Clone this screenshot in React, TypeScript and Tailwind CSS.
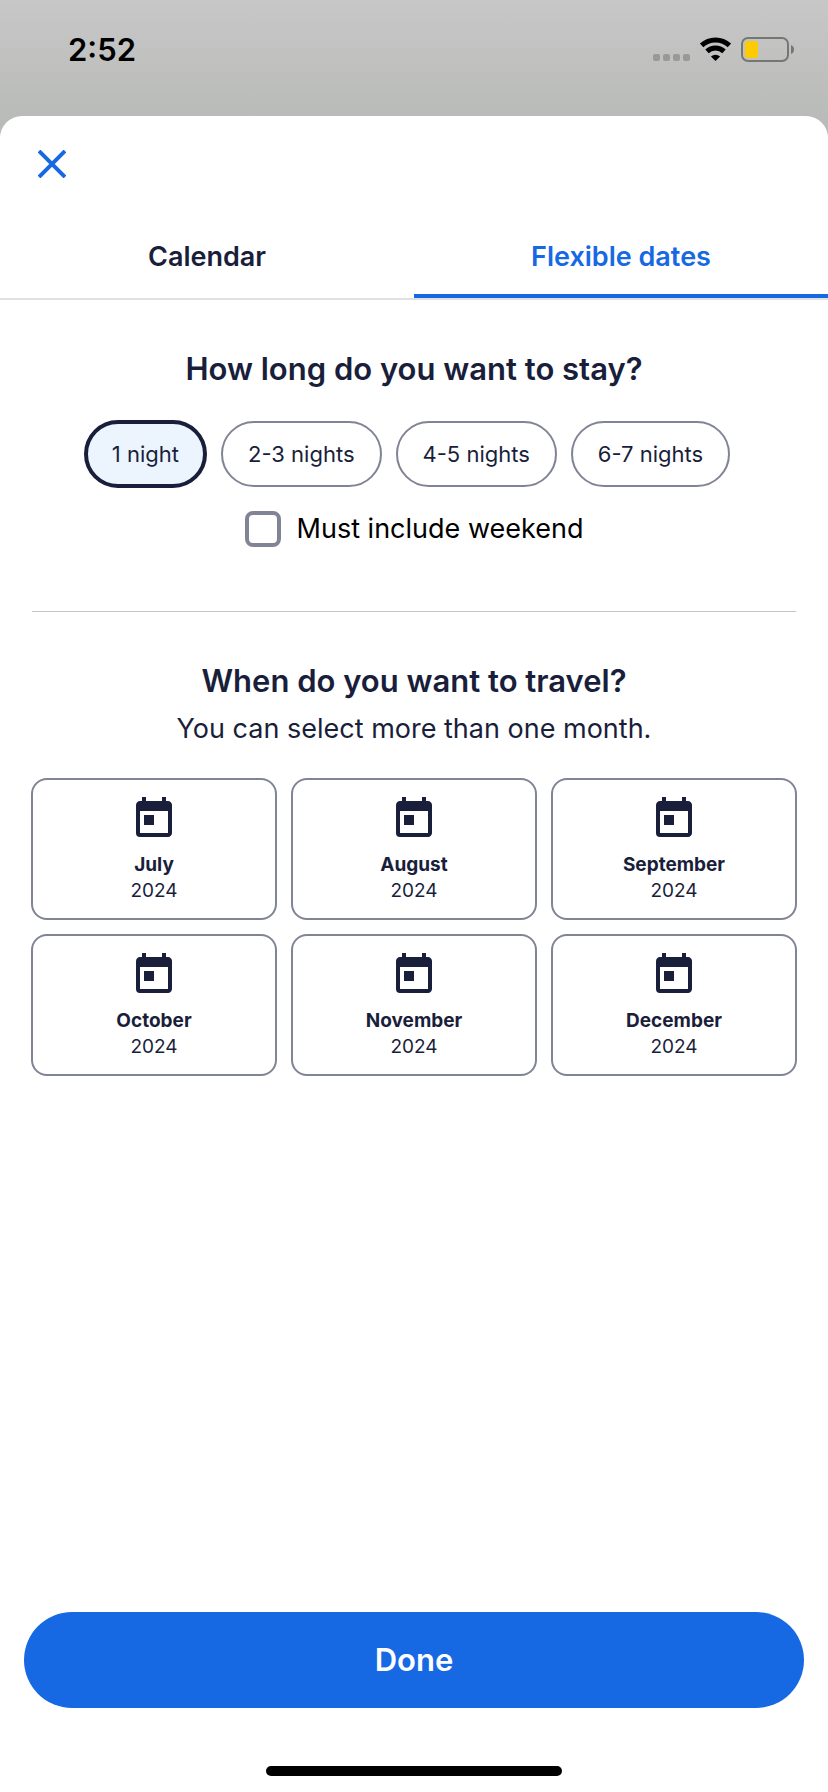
import { useState } from "react"
import clsx from "clsx"
import { MdToday } from "react-icons/md"

const stays = ["1 night", "2-3 nights", "4-5 nights", "6-7 nights"]
const months = ["July", "August", "September", "October", "November", "December"]

function StatusBar() {
    return (
        <div className="h-[116px] flex flex-row items-start justify-between pl-[68px] pr-[34px] pt-[30px] text-black">
            <span className="text-[31px] leading-10 font-semibold">2:52</span>
            <svg width="142" height="28" viewBox="0 0 142 28" className="mt-[6px]" aria-hidden="true">
                <g fill="#989a98">
                    <rect x="1" y="18" width="7" height="7" rx="2" />
                    <rect x="11" y="18" width="7" height="7" rx="2" />
                    <rect x="21" y="18" width="7" height="7" rx="2" />
                    <rect x="31" y="18" width="7" height="7" rx="2" />
                </g>
                <g fill="none" stroke="#000" strokeWidth="5">
                    <path d="M49.6 9.4a20.5 20.5 0 0 1 27.8 0" />
                    <path d="M55 15.4a12.5 12.5 0 0 1 17 0" />
                </g>
                <path d="M63.5 25l-4.6-4.6a7 7 0 0 1 9.2 0z" fill="#000" />
                <rect x="90" y="2" width="46" height="23" rx="6" fill="none" stroke="#757775" strokeWidth="2" />
                <rect x="93" y="5" width="13" height="17" rx="3" fill="#fdcb00" />
                <path d="M139 9q3 1 3 4.5t-3 4.5z" fill="#757775" />
            </svg>
        </div>
    )
}

function Tab({ label, active, onClick }: { label: string; active: boolean; onClick: () => void }) {
    return (
        <button
            type="button"
            role="tab"
            aria-selected={active}
            onClick={onClick}
            className={clsx(
                "flex-1 h-[84px] pt-[6px] border-b-4 text-[27px] leading-8 font-semibold",
                active ? "border-[#1668e3] text-[#1668e3]" : "border-transparent"
            )}
        >
            {label}
        </button>
    )
}

export default function App() {
    const [tab, setTab] = useState("Flexible dates")
    const [stay, setStay] = useState("1 night")
    const [picked, setPicked] = useState<string[]>([])

    const toggle = (month: string) =>
        setPicked(picked.includes(month) ? picked.filter((m) => m !== month) : [...picked, month])

    return (
        <div className="min-h-screen flex flex-col bg-linear-to-b from-[#c7c7c7] to-[#b9bbb8] to-[120px] font-['Inter',sans-serif] text-[#191e3b]">
            <StatusBar />
            <main className="flex-1 flex flex-col rounded-t-[22px] bg-white">
                <button type="button" aria-label="Close" className="self-start ml-[34px] mt-[30px] mb-8 p-1">
                    <svg width="28" height="28" viewBox="0 0 28 28" fill="none" stroke="#1668e3" strokeWidth="4">
                        <path d="M1 1l26 26M27 1L1 27" />
                    </svg>
                </button>
                <div role="tablist" className="flex flex-row border-b-2 border-[#dfe0e4]">
                    {["Calendar", "Flexible dates"].map((label) => (
                        <Tab key={label} label={label} active={tab === label} onClick={() => setTab(label)} />
                    ))}
                </div>

                <section className="flex flex-col items-center pt-[49px]">
                    <h2 className="text-[31px] leading-10 font-semibold">How long do you want to stay?</h2>
                    <div className="flex flex-row items-center mt-[31px]">
                        {stays.map((s) => (
                            <button
                                key={s}
                                type="button"
                                aria-pressed={stay === s}
                                onClick={() => setStay(s)}
                                className={clsx(
                                    "mr-[14px] rounded-full text-[22px] leading-8",
                                    stay === s
                                        ? "h-[68px] px-6 border-4 border-[#191e3b] bg-[#ecf4fe]"
                                        : "h-[66px] px-[25px] border-2 border-[#818494]"
                                )}
                            >
                                {s}
                            </button>
                        ))}
                    </div>
                    <label className="flex flex-row items-center gap-4 mt-[23px] text-[27px] leading-9 text-black">
                        <input
                            type="checkbox"
                            className="appearance-none size-9 rounded-lg border-4 border-[#818494] bg-white checked:bg-[#1668e3]"
                        />
                        Must include weekend
                    </label>
                </section>

                <hr className="mx-8 mt-16 border-[#c4c5c8]" />

                <section className="flex flex-col items-center pt-[49px] px-[31px]">
                    <h2 className="text-[31px] leading-10 font-semibold">When do you want to travel?</h2>
                    <p className="mt-2 text-[27px] leading-10">You can select more than one month.</p>
                    <div className="w-full grid grid-cols-3 gap-[14px] mt-[29px]">
                        {months.map((month) => (
                            <button
                                key={month}
                                type="button"
                                aria-pressed={picked.includes(month)}
                                onClick={() => toggle(month)}
                                className={clsx(
                                    "flex flex-col items-center h-[142px] pt-[15px] border-2 border-[#818494] rounded-2xl text-[19px] leading-[26px]",
                                    picked.includes(month) && "bg-[#ecf4fe]"
                                )}
                            >
                                <MdToday size={48} />
                                <span className="mt-[9px] font-bold">{month}</span>
                                <span>2024</span>
                            </button>
                        ))}
                    </div>
                </section>

                <footer className="mt-auto px-6 pt-6 pb-4 flex flex-col items-center">
                    <button type="button" className="w-full h-24 rounded-full bg-[#1668e3] text-white text-[31px] leading-10 font-semibold">
                        Done
                    </button>
                    <div className="w-[296px] h-[10px] mt-[58px] rounded-full bg-black" />
                </footer>
            </main>
        </div>
    )
}
